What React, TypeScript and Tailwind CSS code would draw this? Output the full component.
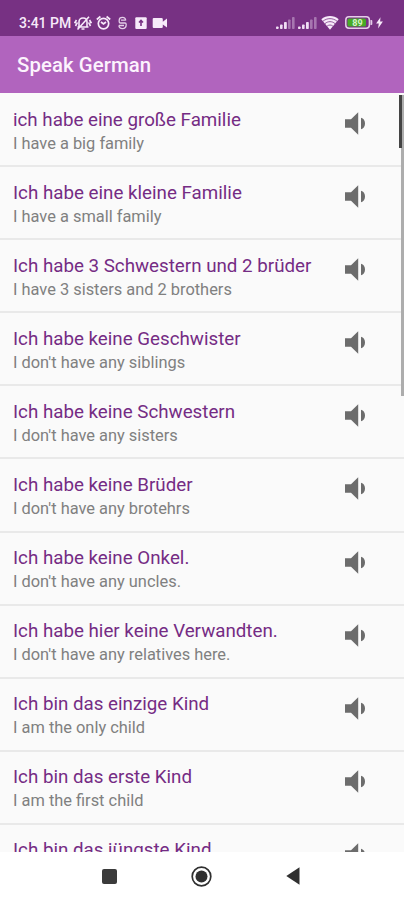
const phrases: [string, string][] = [
  ['ich habe eine große Familie', 'I have a big family'],
  ['Ich habe eine kleine Familie', 'I have a small family'],
  ['Ich habe 3 Schwestern und 2 brüder', 'I have 3 sisters and 2 brothers'],
  ['Ich habe keine Geschwister', "I don't have any siblings"],
  ['Ich habe keine Schwestern', "I don't have any sisters"],
  ['Ich habe keine Brüder', "I don't have any brotehrs"],
  ['Ich habe keine Onkel.', "I don't have any uncles."],
  ['Ich habe hier keine Verwandten.', "I don't have any relatives here."],
  ['Ich bin das einzige Kind', 'I am the only child'],
  ['Ich bin das erste Kind', 'I am the first child'],
  ['Ich bin das jüngste Kind', ''],
];

function Speaker() {
  return (
    <svg className="mt-[18px] h-[23px] w-[21px] shrink-0" viewBox="0 0 21 23" fill="#6c6c6c">
      <path d="M0 7.3H6L13.2 .3V22.7L6 15.7H0Z" />
      <path d="M16 5.8C18.6 6.5 20 8.7 20 11.5S18.6 16.5 16 17.2Z" />
    </svg>
  );
}

function Signal() {
  return (
    <svg className="h-3 w-[19px]" viewBox="0 0 19 12" fill="#f0dff4">
      <rect x="0" y="9.5" width="2.6" height="2.5" rx=".8" />
      <rect x="4" y="7.5" width="2.6" height="4.5" rx=".8" />
      <rect x="8" y="5" width="2.8" height="7" rx=".8" />
      <rect x="12" y="2.5" width="2.6" height="9.5" rx=".8" opacity=".4" />
      <rect x="16" y="0" width="2.6" height="12" rx=".8" opacity=".4" />
    </svg>
  );
}

function StatusBar() {
  return (
    <div className="flex h-9 shrink-0 items-start bg-[#773183] pl-[19px] pt-[15px] text-[#f7eafa]">
      <span className="w-[55px] whitespace-nowrap text-[14px] font-medium leading-[17px]">3:41 PM</span>
      <svg className="h-4 w-[18px]" viewBox="0 0 18 16" fill="none" stroke="currentColor" strokeWidth="1.6">
        <path d="M5 11.5V7C5 4.5 6.7 3 9 3s4 1.5 4 4v4.5M3.5 12h11M7.5 14h3M3.5 14.5L15 1.8M2.5 5L1 7.5l2 .7L1.5 11M15.5 5L17 7.5l-2 .7 1.5 2.8" />
      </svg>
      <svg className="ml-[4px] h-4 w-[15px]" viewBox="0 0 15 16" fill="none" stroke="currentColor" strokeWidth="1.7">
        <circle cx="7.5" cy="8.6" r="5.2" />
        <path d="M.8 4.5L4.4 1.5M14.2 4.5L10.6 1.5M5 7l2.5 2L10 7" />
      </svg>
      <svg className="ml-[6px] h-4 w-[11px] opacity-85" viewBox="0 0 11 16" fill="none" stroke="currentColor" strokeWidth="1.3">
        <path d="M8.7 5.5C8.7 3.4 7.5 2.4 5.5 2.4S2.2 3.4 2.2 5.2V6.8Q2.2 8 3.5 8H8Q9.2 8 9.2 9.5C9.2 12.3 7.8 13.6 5.5 13.6S1.9 12.3 1.9 10.4M4 5.2H8.7M1.9 10.5H7" />
      </svg>
      <svg className="ml-[7px] h-4 w-[12px]" viewBox="0 0 12 16">
        <rect x=".3" y="2.3" width="11.4" height="11.7" rx="1" fill="currentColor" />
        <path d="M6 11V5.5M4 7.5l2-2 2 2" fill="none" stroke="#773183" strokeWidth="1.6" />
      </svg>
      <svg className="ml-[5px] h-4 w-[16px]" viewBox="0 0 16 16" fill="currentColor">
        <path d="M1.8 3H9.5Q10.8 3 10.8 4.3V6.7L15 3.5V12.5L10.8 9.5V12Q10.8 13 9.5 13H1.8Q.7 13 .7 12V4Q.7 3 1.8 3Z" />
      </svg>
      <div className="ml-auto mr-[21px] flex pt-0.5">
        <Signal />
        <div className="w-[3px]" />
        <Signal />
        <svg className="ml-[4px] mt-[-2px] h-[15px] w-[18px]" viewBox="0 0 18 15" fill="none">
          <path d="M.3 4.3C5.3 0 12.7 0 17.7 4.3L9 14.8Z" fill="#f7eafa" />
          <path d="M2 6.2C6 2.8 12 2.8 16 6.2M4 8.6C7 6 11 6 14 8.6M6.2 11C8 9.7 10 9.7 11.8 11" stroke="#773183" strokeWidth=".8" />
        </svg>
        <svg className="ml-[6px] mt-[-1px] h-[13px] w-[28px]" viewBox="0 0 28 13">
          <rect x=".8" y=".8" width="23.6" height="11.4" rx="3.2" fill="#773183" stroke="#e5cde9" strokeWidth="1.5" />
          <path d="M25.5 4h.8q1 0 1 1v3q0 1-1 1h-.8z" fill="#e5cde9" />
          <rect x="2.5" y="2.4" width="18.5" height="8.2" rx="1.5" fill="#46aa27" />
          <text x="12.5" y="9.7" textAnchor="middle" className="font-bold" fontSize="9" fill="#d6f2c9">89</text>
        </svg>
        <svg className="ml-[3px] h-3 w-[7px]" viewBox="0 0 7 12" fill="currentColor">
          <path d="M4.5.2L.1 6.4H2.8L2.1 11.4 6.9 4.6H4.1Z" />
        </svg>
      </div>
    </div>
  );
}

export default function App() {
  return (
    <div className="flex h-[900px] w-[404px] flex-col overflow-hidden bg-white font-[Roboto,sans-serif]">
      <StatusBar />
      <header className="flex h-[57px] shrink-0 items-center bg-[#b164be] pl-[17px] pt-0.5">
        <h1 className="text-[20.35px] font-medium tracking-[0.08px] text-[#fcf3fd]">Speak German</h1>
      </header>
      <main className="relative h-[759px] shrink-0 overflow-hidden bg-[#fafafa] pt-px">
        {phrases.map(([de, en]) => (
          <div key={de} className="flex h-[73.1px] items-start border-b-2 border-[#e9e9e9] pl-[13px]">
            <div className="w-[332px] shrink-0 whitespace-nowrap pt-[13.5px]">
              <div className="text-[18.75px] leading-6 text-[#752c84]">{de}</div>
              <div className="text-[16.4px] leading-[23px] text-[#808080]">{en}</div>
            </div>
            <Speaker />
          </div>
        ))}
        <div className="absolute right-0 top-0.5 h-[301px] w-[3px] bg-[#adadad]" />
        <div className="absolute right-[2px] top-0.5 h-[53px] w-[3px] bg-[#444]" />
      </main>
      <nav className="flex h-12 items-center bg-white text-[#303030]">
        <div className="ml-[102px] h-[15px] w-[15px] rounded-[2px] bg-[#3b3b3b]" />
        <svg className="ml-[74px] h-[21px] w-[21px]" viewBox="0 0 21 21">
          <circle cx="10.5" cy="10.5" r="9.3" fill="none" stroke="currentColor" strokeWidth="1.7" />
          <circle cx="10.5" cy="10.5" r="6" fill="currentColor" />
        </svg>
        <svg className="ml-[74px] h-[18px] w-[14px]" viewBox="0 0 14 18" fill="currentColor">
          <path d="M.3 9L13.5.3V17.7Z" />
        </svg>
      </nav>
    </div>
  );
}
